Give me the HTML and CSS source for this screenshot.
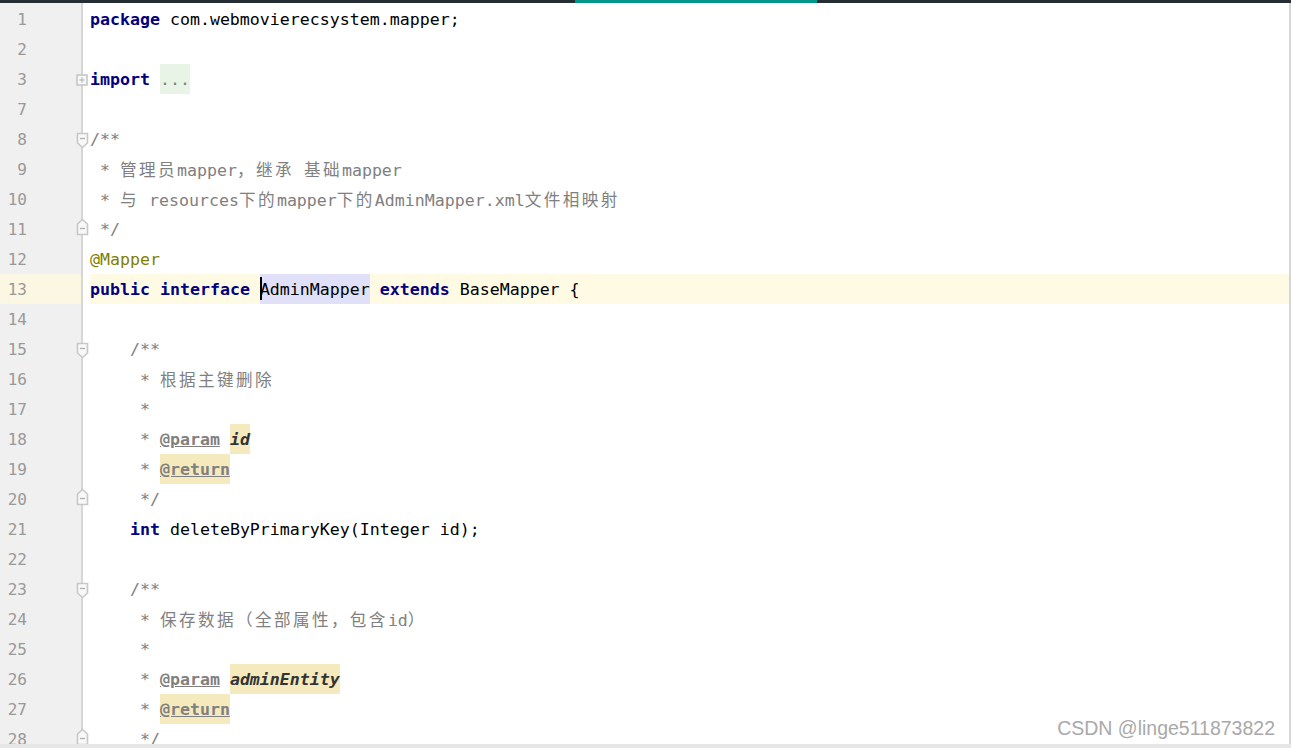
FILE: index.html
```html
<!DOCTYPE html>
<html lang="zh">
<head>
  <meta charset="UTF-8">
  <title>AdminMapper.java</title>
  <link rel="stylesheet" href="styles.css">
</head>
<body>
  <div class="tabbar"><div class="tab-active"></div></div>

  <div class="editor">
    <div class="row"><div class="num">1</div><div class="code"><span class="kw">package</span> com.webmovierecsystem.mapper;</div></div>
    <div class="row"><div class="num">2</div><div class="code"></div></div>
    <div class="row">
      <div class="num">3</div>
      <svg class="fold fold-plus" width="12" height="13" viewBox="0 0 12 13"><rect x="1" y="1" width="10" height="10" fill="#f7f7f7" stroke="#c4c4c4" stroke-width="1.5"/><path d="M3.5 6H8.5M6 3.5V8.5" stroke="#b4b4b4" stroke-width="1.2"/></svg>
      <div class="code"><span class="kw">import</span> <span class="dots">...</span></div>
    </div>
    <div class="row"><div class="num">7</div><div class="code"></div></div>
    <div class="row">
      <div class="num">8</div>
      <svg class="fold fold-open" width="13" height="17" viewBox="0 0 13 17"><path d="M1.5 1.5H11.5V11L6.5 15.5L1.5 11Z" fill="#f8f8f8" stroke="#c8c8c8" stroke-width="1.6"/><path d="M4 6.5H9" stroke="#b0b0b0" stroke-width="1.3"/></svg>
      <div class="code cm">/**</div>
    </div>
    <div class="row"><div class="num">9</div><div class="code cm"> * <span class="zh">管理员</span>mapper<span class="zh">，继承</span> <span class="zh">基础</span>mapper</div></div>
    <div class="row"><div class="num">10</div><div class="code cm"> * <span class="zh">与</span> resources<span class="zh">下的</span>mapper<span class="zh">下的</span>AdminMapper.xml<span class="zh">文件相映射</span></div></div>
    <div class="row">
      <div class="num">11</div>
      <svg class="fold fold-close" width="13" height="18" viewBox="0 0 13 18"><path d="M1.5 16.5H11.5V6L6.5 1.5L1.5 6Z" fill="#f8f8f8" stroke="#c8c8c8" stroke-width="1.6"/><path d="M4 10.5H9" stroke="#b0b0b0" stroke-width="1.3"/></svg>
      <div class="code cm"> */</div>
    </div>
    <div class="row"><div class="num">12</div><div class="code"><span class="an">@Mapper</span></div></div>
    <div class="row current"><div class="num">13</div><div class="code"><span class="kw">public</span> <span class="kw">interface</span> <span class="sel"><span class="caret"></span>AdminMapper</span> <span class="kw">extends</span> BaseMapper {</div></div>
    <div class="row"><div class="num">14</div><div class="code"></div></div>
    <div class="row">
      <div class="num">15</div>
      <svg class="fold fold-open" width="13" height="17" viewBox="0 0 13 17"><path d="M1.5 1.5H11.5V11L6.5 15.5L1.5 11Z" fill="#f8f8f8" stroke="#c8c8c8" stroke-width="1.6"/><path d="M4 6.5H9" stroke="#b0b0b0" stroke-width="1.3"/></svg>
      <div class="code cm">    /**</div>
    </div>
    <div class="row"><div class="num">16</div><div class="code cm">     * <span class="zh">根据主键删除</span></div></div>
    <div class="row"><div class="num">17</div><div class="code cm">     *</div></div>
    <div class="row"><div class="num">18</div><div class="code cm">     * <span class="tag">@param</span> <span class="pn hl">id</span></div></div>
    <div class="row"><div class="num">19</div><div class="code cm">     * <span class="tag hl">@return</span></div></div>
    <div class="row">
      <div class="num">20</div>
      <svg class="fold fold-close" width="13" height="18" viewBox="0 0 13 18"><path d="M1.5 16.5H11.5V6L6.5 1.5L1.5 6Z" fill="#f8f8f8" stroke="#c8c8c8" stroke-width="1.6"/><path d="M4 10.5H9" stroke="#b0b0b0" stroke-width="1.3"/></svg>
      <div class="code cm">     */</div>
    </div>
    <div class="row"><div class="num">21</div><div class="code">    <span class="kw">int</span> deleteByPrimaryKey(Integer id);</div></div>
    <div class="row"><div class="num">22</div><div class="code"></div></div>
    <div class="row">
      <div class="num">23</div>
      <svg class="fold fold-open" width="13" height="17" viewBox="0 0 13 17"><path d="M1.5 1.5H11.5V11L6.5 15.5L1.5 11Z" fill="#f8f8f8" stroke="#c8c8c8" stroke-width="1.6"/><path d="M4 6.5H9" stroke="#b0b0b0" stroke-width="1.3"/></svg>
      <div class="code cm">    /**</div>
    </div>
    <div class="row"><div class="num">24</div><div class="code cm">     * <span class="zh">保存数据（全部属性，包含</span>id<span class="zh">）</span></div></div>
    <div class="row"><div class="num">25</div><div class="code cm">     *</div></div>
    <div class="row"><div class="num">26</div><div class="code cm">     * <span class="tag">@param</span> <span class="pn hl">adminEntity</span></div></div>
    <div class="row"><div class="num">27</div><div class="code cm">     * <span class="tag hl">@return</span></div></div>
    <div class="row">
      <div class="num">28</div>
      <svg class="fold fold-close" width="13" height="18" viewBox="0 0 13 18"><path d="M1.5 16.5H11.5V6L6.5 1.5L1.5 6Z" fill="#f8f8f8" stroke="#c8c8c8" stroke-width="1.6"/><path d="M4 10.5H9" stroke="#b0b0b0" stroke-width="1.3"/></svg>
      <div class="code cm">     */</div>
    </div>

    <div class="watermark">CSDN @linge511873822</div>
  </div>

  <div class="bottombar"></div>
</body>
</html>
```

FILE: styles.css
```css
body {
  margin: 0;
  width: 1291px;
  height: 748px;
  overflow: hidden;
  background: #fff;
  font-family: "DejaVu Sans Mono", "Noto Sans CJK SC", monospace;
  font-size: 16.6px;
  color: #000;
}
.tabbar {
  height: 3px;
  background: #252d35;
  padding-left: 575px;
}
.tab-active {
  width: 242px;
  height: 3px;
  background: #009688;
}
.editor {
  position: relative;
  height: 740px;
  padding-top: 1px;
  overflow: hidden;
  border-right: 2px solid #d6d6d6;
  background: linear-gradient(to right, #f0f0f0 81px, #d6d6d6 81px, #d6d6d6 83px, #fff 83px);
}
.row {
  position: relative;
  display: flex;
  height: 30px;
  line-height: 31px;
}
.num {
  width: 27px;
  padding-right: 54px;
  text-align: right;
  color: #999;
  font-size: 16px;
}
.code {
  margin-left: 9px;
  white-space: pre;
}
.current .num {
  background: #fcf7e3;
}
.current .code {
  flex: 1;
  background: #fffae3;
}
.current::after {
  content: "";
  position: absolute;
  left: 81px;
  top: 0;
  width: 2px;
  height: 30px;
  background: #d6d6d6;
}
.kw { color: #000080; font-weight: bold; }
.cm { color: #808080; }
.an { color: #808000; }
.tag { color: #808080; font-weight: bold; text-decoration: underline; }
.pn { color: #333; font-weight: bold; font-style: italic; }
.hl { display: inline-block; height: 30px; background: #f5eabd; }
.dots { display: inline-block; height: 30px; color: #808080; background: #e8f5e6; }
.sel { display: inline-block; position: relative; height: 30px; background: #e0e0f8; }
.caret {
  position: absolute;
  left: 0;
  top: 3px;
  width: 2px;
  height: 23px;
  background: #000;
}
.zh {
  font-family: "Noto Sans CJK SC", sans-serif;
  letter-spacing: 2.4px;
}
.fold {
  position: absolute;
  left: 76px;
}
.fold-plus { top: 10px; }
.fold-open { top: 8px; }
.fold-close { top: 4px; }
.watermark {
  position: absolute;
  right: 14px;
  bottom: 4px;
  font-family: "Liberation Sans", Arial, sans-serif;
  font-size: 19.5px;
  line-height: 24px;
  color: #a9a9a9;
}
.bottombar {
  height: 4px;
  background: #e6e6e6;
}
```
